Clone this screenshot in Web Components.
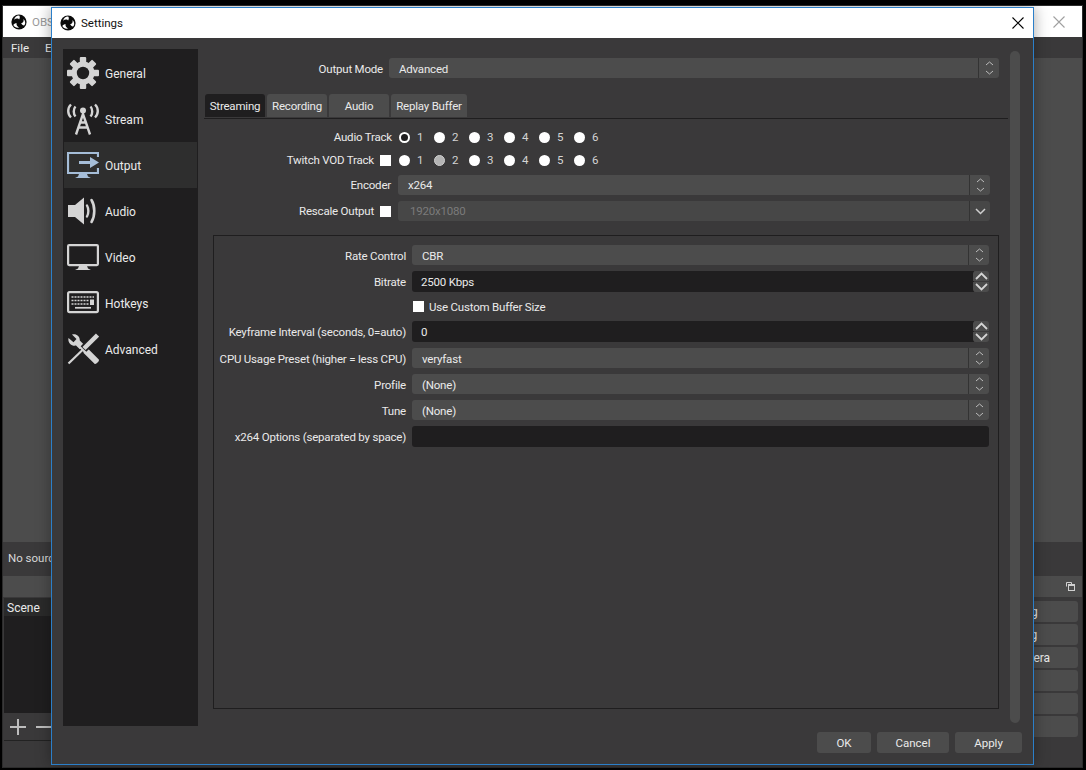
<!DOCTYPE html>
<html>
<head>
<meta charset="utf-8">
<title>OBS Settings</title>
<style>
  html, body { margin: 0; height: 100%; background: #000; overflow: hidden; }
  body { font: 11.5px Roboto, "Liberation Sans", sans-serif; color: #eaeaea; }
</style>
</head>
<body>
<obs-main></obs-main>
<obs-settings>
  <side-item icon="general">General</side-item>
  <side-item icon="stream">Stream</side-item>
  <side-item icon="output" selected>Output</side-item>
  <side-item icon="audio">Audio</side-item>
  <side-item icon="video">Video</side-item>
  <side-item icon="hotkeys">Hotkeys</side-item>
  <side-item icon="advanced">Advanced</side-item>

  <form-row slot="form" label="Output Mode" style="--label-w:179px;--gap:6px;--pt:2px">
    <combo-box>Advanced</combo-box>
  </form-row>

  <form-row slot="pane" label="Audio Track" style="--label-w:179px;--gap:7px;--pb:2px;height:17px"><track-radios checked="1"></track-radios></form-row>
  <form-row slot="pane" label="Twitch VOD Track" style="--label-w:178px;--gap:8px;--pb:2px;height:17px"><check-box slot="after"></check-box><track-radios dim="2"></track-radios></form-row>
  <form-row slot="pane" label="Encoder" style="--label-w:178px;--gap:7px;--lh:20px"><combo-box>x264</combo-box></form-row>
  <form-row slot="pane" label="Rescale Output" style="--label-w:178px;--gap:7px;--lh:20px"><check-box slot="after"></check-box><combo-box disabled single>1920x1080</combo-box></form-row>

  <form-row slot="group" label="Rate Control" style="--pt:2px"><combo-box>CBR</combo-box></form-row>
  <form-row slot="group" label="Bitrate" style="height:21px"><spin-box>2500 Kbps</spin-box></form-row>
  <form-row slot="group" style="height:17px"><check-box>Use Custom Buffer Size</check-box></form-row>
  <form-row slot="group" label="Keyframe Interval (seconds, 0=auto)" style="height:21px;--pt:1px"><spin-box>0</spin-box></form-row>
  <form-row slot="group" label="CPU Usage Preset (higher = less CPU)" style="--pt:2px"><combo-box>veryfast</combo-box></form-row>
  <form-row slot="group" label="Profile" style="--pt:2px"><combo-box>(None)</combo-box></form-row>
  <form-row slot="group" label="Tune" style="--pt:2px"><combo-box>(None)</combo-box></form-row>
  <form-row slot="group" label="x264 Options (separated by space)" style="height:21px"><text-field></text-field></form-row>
</obs-settings>

<script>
const SWIRL = 'M8.200 1.600C5.600 1.400 3.500 3.400 3.200 5.700c1-1.200 2.500-1.600 3.800-1.100.5.200.9.500 1.100.900C8.900 4.200 9.200 2.700 8.200 1.600z';
const OBS_LOGO = `
  <svg width="16" height="16" viewBox="0 0 16 16">
    <circle cx="8" cy="8" r="7.600" fill="#0a0a0a"/>
    <g fill="#fff">
      <path d="${SWIRL}"/>
      <path d="${SWIRL}" transform="rotate(120 8 8)"/>
      <path d="${SWIRL}" transform="rotate(240 8 8)"/>
    </g>
  </svg>`;

const CLOSE_X = color => `
  <svg width="12" height="12" viewBox="0 0 12 12"><path d="M.5.5l11 11M11.500.5l-11 11" stroke="${color}" stroke-width="1.100" fill="none"/></svg>`;

const CHEVRONS = `
  <svg width="9" height="16" viewBox="0 0 9 16" fill="none" stroke="#bcbcbc" stroke-width="1">
    <path d="M1 5l3.500-3 3.500 3M1 11l3.500 3 3.500-3"/>
  </svg>`;

const ICONS = {
  general: `
    <g fill="#d4d4d4">
      <circle cx="16" cy="16" r="11.500"/>
      <rect x="12.800" y="0" width="6.400" height="32" rx="1"/>
      <rect x="12.800" y="0" width="6.400" height="32" rx="1" transform="rotate(45 16 16)"/>
      <rect x="12.800" y="0" width="6.400" height="32" rx="1" transform="rotate(90 16 16)"/>
      <rect x="12.800" y="0" width="6.400" height="32" rx="1" transform="rotate(135 16 16)"/>
    </g>
    <circle cx="16" cy="16" r="6.200" fill="#1f1e1f"/>`,
  stream: `
    <g fill="none" stroke="#d4d4d4" stroke-width="2.400">
      <path d="M4 1.500C.300 5 .300 11 4 14.500M28 1.500c3.700 3.500 3.700 9.500 0 13"/>
      <path d="M8.500 3.500c-2.300 2.500-2.300 7.500 0 10M23.500 3.500c2.300 2.500 2.300 7.500 0 10"/>
      <path d="M9 31.500L16 11 23 31.500M11.500 24.500h9M13 19.500h6"/>
    </g>
    <circle cx="16" cy="7.500" r="3" fill="#d4d4d4"/>`,
  output: `
    <path d="M31 8V4H1v20h30v-5" fill="none" stroke="#a5bdd8" stroke-width="2.200"/>
    <path d="M12 12h11V8l9 5.500-9 5.500v-4H12z" fill="#a5bdd8"/>
    <path d="M12 25h8l1 2.500 3 1.500H8l3-1.500z" fill="#a5bdd8"/>`,
  audio: `
    <path d="M1 10h7l9-7.500v27L8 22H1z" fill="#d4d4d4"/>
    <g fill="none" stroke="#d4d4d4" stroke-linecap="round">
      <path d="M20 10.500c1.800 3 1.800 8 0 11" stroke-width="2.400"/>
      <path d="M24.500 5c3.700 6 3.700 16 0 22" stroke-width="2.600"/>
    </g>`,
  video: `
    <rect x="1.100" y="4.100" width="29.800" height="20" rx="1" fill="none" stroke="#d4d4d4" stroke-width="2.200"/>
    <path d="M12 25h8l1 2.500 3 1.500H8l3-1.500z" fill="#d4d4d4"/>`,
  hotkeys: `
    <rect x="1.100" y="5.100" width="29.800" height="20" rx="1.500" fill="none" stroke="#d4d4d4" stroke-width="2.200"/>
    <g fill="none" stroke="#d4d4d4" stroke-width="1.700">
      <path d="M4.500 10H27" stroke-dasharray="2 1"/>
      <path d="M4.500 13.500H22" stroke-dasharray="2 1"/>
      <path d="M4.500 17H22" stroke-dasharray="2 1"/>
      <path d="M8 20.800h16"/>
    </g>
    <rect x="23" y="12.500" width="4" height="5.500" fill="#d4d4d4"/>`,
  advanced: `
    <path d="M1.500 5l5 4.300 3-3.300L5 1.500C9 .2 13 3 12.800 7.500l19 19c1.200 1.300-2.800 5.500-4.300 4.200L9 12.500C4.500 13.500.500 9.500 1.500 5z" fill="#d4d4d4"/>
    <g fill="none" stroke-linecap="butt">
      <path d="M30 2.500L16.500 16" stroke="#1f1e1f" stroke-width="8"/>
      <path d="M15 17.500L1.500 30.500" stroke="#1f1e1f" stroke-width="5"/>
      <path d="M30.500 2L17 15.500" stroke="#d4d4d4" stroke-width="4.500"/>
      <path d="M15.500 17L1.500 30.500" stroke="#d4d4d4" stroke-width="2.200"/>
    </g>`
};

class ObsMain extends HTMLElement {
  constructor() {
    super();
    this.attachShadow({ mode: 'open' });
    this.shadowRoot.innerHTML = `
      <style>
        :host {
          position: absolute; left: 3px; top: 6px; width: 1079px; height: 761px;
          display: flex; flex-direction: column; background: #4c4c4c;
          outline: 1px solid #2c2c2c;
        }
        .title { height: 31px; background: #fff; display: flex; align-items: center; padding: 0 17px 0 8px; gap: 5px; color: #999; }
        .title span { flex: 1; }
        .menu { height: 21px; background: #3a393a; display: flex; align-items: center; padding-left: 8px; gap: 16px; }
        .preview { flex: 1; }
        .context { height: 34px; background: #3a393a; display: flex; align-items: center; padding: 0 0 2px 5px; box-sizing: border-box; color: #d8d8d8; }
        .docks { height: 191px; display: flex; background: #3a393a; }
        .scenes { flex: 1; display: flex; flex-direction: column; }
        .head { height: 21px; background: #4c4c4c; flex: none; display: flex; align-items: center; justify-content: flex-end; padding-right: 7px; }
        .list { height: 115px; margin: 1px 0 0 1px; background: #1f1e1f; }
        .row { height: 18px; background: #2a2a2a; padding-left: 3px; line-height: 20px; font-size: 12px; }
        .tools { height: 27px; margin-left: 1px; border-bottom: 1px solid #222; display: flex; align-items: center; padding-left: 6px; gap: 10px; }
        .controls { width: 170px; }
        .buttons { display: flex; flex-direction: column; gap: 2px; padding: 4px 4px 0 0; font-size: 12px; }
        .buttons div { height: 21px; background: #4c4c4c; border-radius: 3px; text-align: center; line-height: 22px; padding-left: 2px; }
      </style>
      <div class="title">${OBS_LOGO}<span>OBS</span>${CLOSE_X('#a0a0a0')}</div>
      <div class="menu"><span>File</span><span>Edit</span></div>
      <div class="preview"></div>
      <div class="context">No source selected</div>
      <div class="docks">
        <div class="scenes">
          <div class="head"></div>
          <div class="list"><div class="row">Scene</div></div>
          <div class="tools">
            <svg width="16" height="16" viewBox="0 0 16 16"><path d="M8 0v16M0 8h16" stroke="#bdbdbd" stroke-width="2"/></svg>
            <svg width="16" height="16" viewBox="0 0 16 16"><path d="M0 8h16" stroke="#bdbdbd" stroke-width="2"/></svg>
          </div>
        </div>
        <div class="controls">
          <div class="head">
            <svg width="9" height="9" viewBox="0 0 9 9" fill="none" stroke="#d0d0d0"><path d="M.5 4.500v-4h5v2"/><rect x="2.500" y="2.500" width="6" height="6"/><path d="M2.500 3.500h6" /></svg>
          </div>
          <div class="buttons">
            <div>Start Streaming</div><div>Start Recording</div><div>Start Virtual Camera</div>
            <div>Studio Mode</div><div>Settings</div><div>Exit</div>
          </div>
        </div>
      </div>`;
  }
}

class ObsSettings extends HTMLElement {
  constructor() {
    super();
    this.attachShadow({ mode: 'open' });
    this.shadowRoot.innerHTML = `
      <style>
        :host {
          position: absolute; left: 51px; top: 7px; width: 983px; height: 758px; box-sizing: border-box;
          border: 1px solid #2b7fc9; background: #3a393a;
          display: flex; flex-direction: column;
          box-shadow: 0 0 14px rgba(0,0,0,.35);
        }
        .title { height: 30px; flex: none; background: #fff; color: #111; display: flex; align-items: center; padding: 0 9px 0 8px; gap: 5px; }
        .title span { flex: 1; }
        .body { flex: 1; min-height: 0; padding: 11px; display: flex; flex-direction: column; gap: 6px; }
        .top { flex: 1; min-height: 0; display: flex; }
        .side { width: 135px; background: #1f1e1f; padding: 1px; box-sizing: border-box; margin-right: 6px; flex: none; font-size: 12px; }
        .content { width: 804px; flex: none; padding-top: 9px; box-sizing: border-box; letter-spacing: -.2px; }
        .form { padding-right: 9px; }
        .tabs { display: flex; gap: 2px; margin-top: 16px; padding-left: 1px; height: 24px; border-bottom: 1px solid #1f1e1f; }
        .tab { height: 23px; background: #4c4c4c; border-radius: 3px 3px 0 0; display: flex; align-items: center; justify-content: center; }
        .tab.on { background: #1f1e1f; }
        .pane { padding: 10px 9px 0; }
        .rows { display: flex; flex-direction: column; gap: 6px; padding-right: 9px; }
        .group { margin-top: 14px; height: 474px; box-sizing: border-box; border: 1px solid #1f1e1f; padding: 9px 9px 0 0; display: flex; flex-direction: column; gap: 6px; }
        .scroll { width: 10px; margin: 2px 2px 3px 2px; background: #4c4c4c; border-radius: 5px; flex: none; }
        .foot { height: 21px; flex: none; display: flex; justify-content: flex-end; gap: 6px; }
        .foot div { background: #4c4c4c; border-radius: 3px; display: flex; align-items: center; justify-content: center; }
      </style>
      <div class="title">${OBS_LOGO}<span>Settings</span>${CLOSE_X('#000')}</div>
      <div class="body">
        <div class="top">
          <div class="side"><slot></slot></div>
          <div class="content">
            <div class="form"><slot name="form"></slot></div>
            <div class="tabs">
              <div class="tab on" style="width:60px">Streaming</div>
              <div class="tab" style="width:60px">Recording</div>
              <div class="tab" style="width:60px">Audio</div>
              <div class="tab" style="width:76px">Replay Buffer</div>
            </div>
            <div class="pane">
              <div class="rows"><slot name="pane"></slot></div>
              <div class="group"><slot name="group"></slot></div>
            </div>
          </div>
          <div class="scroll"></div>
        </div>
        <div class="foot">
          <div style="width:54px">OK</div>
          <div style="width:72px">Cancel</div>
          <div style="width:67px">Apply</div>
        </div>
      </div>`;
  }
}

class SideItem extends HTMLElement {
  constructor() {
    super();
    this.attachShadow({ mode: 'open' });
    const icon = ICONS[this.getAttribute('icon')];
    this.shadowRoot.innerHTML = `
      <style>
        :host { display: flex; align-items: center; height: 46px; gap: 6px; padding-left: 3px; }
        :host([selected]) { background: #2e2e2e; }
        svg { flex: none; }
        span { padding-top: 2px; }
      </style>
      <svg width="32" height="32" viewBox="0 0 32 32">${icon}</svg>
      <span><slot></slot></span>`;
  }
}

class FormRow extends HTMLElement {
  constructor() {
    super();
    this.attachShadow({ mode: 'open' });
    this.shadowRoot.innerHTML = `
      <style>
        :host { display: flex; align-items: center; height: 20px; }
        .label { width: var(--label-w, 192px); flex: none; display: flex; justify-content: flex-end; align-items: center; gap: 6px; margin-right: var(--gap, 6px); white-space: nowrap; }
        .label span { padding: var(--pt, 0) 0 var(--pb, 0); }
        .field { flex: 1; min-width: 0; display: flex; align-self: stretch; align-items: center; }
        ::slotted(combo-box), ::slotted(spin-box), ::slotted(text-field) { flex: 1; }
      </style>
      <div class="label"><span>${this.getAttribute('label') || ''}</span><slot name="after"></slot></div>
      <div class="field"><slot></slot></div>`;
  }
}

class ComboBox extends HTMLElement {
  constructor() {
    super();
    this.attachShadow({ mode: 'open' });
    const arrow = this.hasAttribute('single')
      ? `<svg width="11" height="7" viewBox="0 0 11 7" fill="none" stroke="#cfcfcf" stroke-width="1.500"><path d="M1 1l4.500 4.500L10 1"/></svg>`
      : CHEVRONS;
    this.shadowRoot.innerHTML = `
      <style>
        :host { display: flex; height: 20px; background: #4c4c4c; border-radius: 3px; align-self: stretch; }
        :host([disabled]) { color: #7b7b7b; background: #474747; }
        :host([disabled]) .text { padding-left: 12px; }
        .text { flex: 1; padding-left: 10px; line-height: var(--lh, 22px); }
        .btn { width: 20px; border-left: 1px solid #333; display: flex; align-items: center; justify-content: center; }
      </style>
      <div class="text"><slot></slot></div>
      <div class="btn">${arrow}</div>`;
  }
}

class SpinBox extends HTMLElement {
  constructor() {
    super();
    this.attachShadow({ mode: 'open' });
    const chev = d => `<svg width="13" height="8" viewBox="0 0 13 8" fill="none" stroke="#d4d4d4" stroke-width="1.800"><path d="${d}"/></svg>`;
    this.shadowRoot.innerHTML = `
      <style>
        :host { display: flex; height: 21px; align-self: stretch; }
        .text { flex: 1; background: #1f1e1f; border-radius: 3px 0 0 3px; padding-left: 9px; line-height: 22px; }
        .btns { width: 16px; display: flex; flex-direction: column; gap: 1px; margin-left: -1px; }
        .btns div { flex: 1; background: #4c4c4c; display: flex; align-items: center; justify-content: center; }
        .btns div:first-child { border-radius: 3px 3px 0 0; }
        .btns div:last-child { border-radius: 0 0 3px 3px; }
      </style>
      <div class="text"><slot></slot></div>
      <div class="btns"><div>${chev('M1 7l5.500-5.500L12 7')}</div><div>${chev('M1 1l5.500 5.500L12 1')}</div></div>`;
  }
}

class TextField extends HTMLElement {
  constructor() {
    super();
    this.attachShadow({ mode: 'open' });
    this.shadowRoot.innerHTML = `
      <style>:host { display: block; height: 21px; background: #1f1e1f; border-radius: 3px; align-self: stretch; }</style>`;
  }
}

class CheckBox extends HTMLElement {
  constructor() {
    super();
    this.attachShadow({ mode: 'open' });
    this.shadowRoot.innerHTML = `
      <style>
        :host { display: flex; align-items: center; gap: 5px; padding-left: 1px; }
        :host([slot="after"]) { padding-left: 0; }
        i { width: 11px; height: 11px; background: #fff; display: block; flex: none; }
      </style>
      <i></i><slot></slot>`;
  }
}

class TrackRadios extends HTMLElement {
  constructor() {
    super();
    this.attachShadow({ mode: 'open' });
    const checked = this.getAttribute('checked');
    const dim = this.getAttribute('dim');
    let items = '';
    for (let n = 1; n <= 6; n++) {
      const cls = String(n) === checked ? 'on' : String(n) === dim ? 'dim' : '';
      items += `<div class="item"><i class="${cls}"></i><span>${n}</span></div>`;
    }
    this.shadowRoot.innerHTML = `
      <style>
        :host { display: flex; }
        .item { width: 35px; display: flex; align-items: center; gap: 7px; color: #d4d4d4; }
        .item span { padding-bottom: 2px; }
        i { width: 11px; height: 11px; border-radius: 50%; background: #fff; box-sizing: border-box; display: block; margin-bottom: 1px; }
        i.on { background: #1f1e1f; border: 2px solid #fff; }
        i.dim { background: #b4b4b4; border: 1px solid #d0d0d0; }
      </style>
      ${items}`;
  }
}

customElements.define('obs-main', ObsMain);
customElements.define('obs-settings', ObsSettings);
customElements.define('side-item', SideItem);
customElements.define('form-row', FormRow);
customElements.define('combo-box', ComboBox);
customElements.define('spin-box', SpinBox);
customElements.define('text-field', TextField);
customElements.define('check-box', CheckBox);
customElements.define('track-radios', TrackRadios);
</script>
</body>
</html>
